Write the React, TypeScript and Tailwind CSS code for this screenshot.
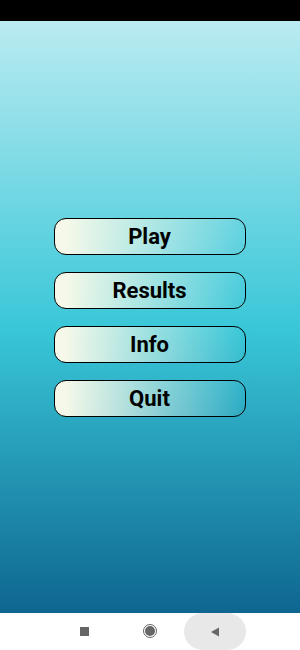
import React from 'react';

const items = ['Play', 'Results', 'Info', 'Quit'];

const App: React.FC = () => {
    return (
        <div className="w-[300px] h-[650px] flex flex-col overflow-hidden font-['Roboto',sans-serif]">
            <div className="h-[21px] bg-black shrink-0" />
            <div className="flex-1 flex flex-col items-center pt-[197px] gap-[17px] bg-[linear-gradient(to_bottom,#baebf1_0%,#39c7d8_52%,#0e6690_100%)]">
                {items.map((label) => (
                    <button
                        key={label}
                        className="w-[192px] h-[37px] -ml-[1px] rounded-[12px] border-[1.5px] border-black bg-gradient-to-r from-[#f6f9e9] from-[5%] to-[#f6f9e9]/0 text-[22px] font-bold text-black leading-none pt-[1px]"
                    >
                        {label}
                    </button>
                ))}
            </div>
            <div className="h-[37px] bg-white shrink-0 flex items-center relative">
                <div className="absolute left-[80px] top-[14px] w-[9px] h-[9px] bg-[#666]" />
                <div className="absolute left-[143px] top-[11px] w-[14px] h-[14px] rounded-full border border-[#666] flex items-center justify-center">
                    <div className="w-[10px] h-[10px] rounded-full bg-[#666]" />
                </div>
                <div className="absolute left-[184px] top-0 w-[62px] h-[37px] rounded-full bg-[#e8e8e8] flex items-center justify-center">
                    <svg width="10" height="10" viewBox="0 0 10 10">
                        <path d="M9 0.5 L1 5 L9 9.5 Z" fill="#666" />
                    </svg>
                </div>
            </div>
        </div>
    );
};

export default App;
